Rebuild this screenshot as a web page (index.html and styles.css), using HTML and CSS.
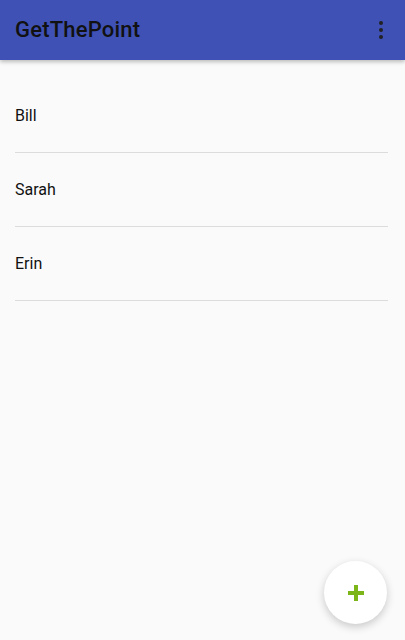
FILE: index.html
```html
<!DOCTYPE html>
<html>
<head>
    <title>GetThePoint</title>
    <link rel="stylesheet" href="styles.css">
</head>
<body>
    <header class="toolbar">
        <h1 class="toolbar-title">GetThePoint</h1>
        <button class="overflow" type="button">
            <svg width="4" height="18" viewBox="0 0 4 18">
                <circle cx="2" cy="2" r="2"/>
                <circle cx="2" cy="9" r="2"/>
                <circle cx="2" cy="16" r="2"/>
            </svg>
        </button>
    </header>

    <ul class="people">
        <li class="person">Bill</li>
        <li class="person">Sarah</li>
        <li class="person">Erin</li>
    </ul>

    <button class="fab" type="button">
        <svg width="16" height="16" viewBox="0 0 16 16">
            <rect x="6" y="0" width="4" height="16"/>
            <rect x="0" y="6" width="16" height="4"/>
        </svg>
    </button>
</body>
</html>
```

FILE: styles.css
```css
body {
    font-family: Roboto, "Noto Sans", sans-serif;
    background-color: #fafafa;
    margin: 0;
    height: 640px;
    overflow: hidden;
}

.toolbar {
    background-color: #3f51b5;
    height: 60px;
    display: flex;
    align-items: center;
    justify-content: space-between;
    padding: 0 15px;
    box-shadow: 0 2px 4px rgba(0, 0, 0, 0.25);
    position: relative;
}

.toolbar-title {
    margin: 0 0 1px;
    font-size: 22px;
    font-weight: 500;
    color: #111;
    letter-spacing: 0.2px;
}

.overflow {
    background: none;
    border: none;
    padding: 0;
    margin-right: 7px;
    display: flex;
    fill: #222;
}

.people {
    list-style: none;
    margin: 0;
    padding: 19px 17px 0 15px;
}

.person {
    height: 74px;
    display: flex;
    align-items: center;
    box-sizing: border-box;
    font-size: 16px;
    color: #111;
    border-bottom: 1px solid #dcdcdc;
}

.fab {
    position: fixed;
    right: 18px;
    bottom: 16px;
    width: 63px;
    height: 63px;
    border-radius: 50%;
    border: none;
    background-color: #fff;
    box-shadow: 0 3px 8px rgba(0, 0, 0, 0.2);
    display: flex;
    align-items: center;
    justify-content: center;
    fill: #7cb518;
}
```
